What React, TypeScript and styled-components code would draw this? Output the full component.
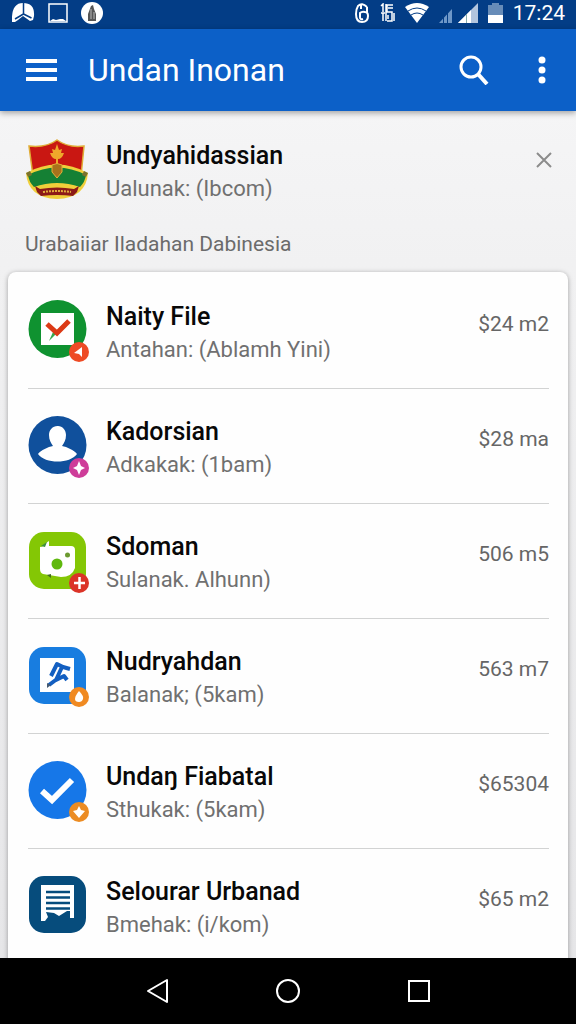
import React from "react";
import styled, { createGlobalStyle } from "styled-components";

const Global = createGlobalStyle`
  *, *::before, *::after { box-sizing: border-box; }
  body { margin: 0; background: #f2f2f3; font-family: Roboto, "Liberation Sans", sans-serif; }
  h1, h2, p, ul { margin: 0; padding: 0; }
  button { border: 0; padding: 0; background: none; color: inherit; font: inherit; cursor: pointer; }
`;

const Screen = styled.div`
  display: flex;
  flex-direction: column;
  height: 100vh;
`;

const StatusBar = styled.div`
  display: flex;
  flex: none;
  justify-content: space-between;
  height: 29px;
  padding: 0 11px 0 12px;
  background: #033d86;
  color: #fff;
`;

const StatusGroup = styled.div<{ $gap: number }>`
  display: flex;
  align-items: center;
  gap: ${(p) => p.$gap}px;
  height: 25px;
`;

const Clock = styled.time`
  font-size: 21px;
  line-height: 26px;
`;

const AppBar = styled.header`
  display: flex;
  flex: none;
  align-items: center;
  position: relative;
  z-index: 1;
  height: 82px;
  padding: 0 14px 0 22px;
  background: #0c60c8;
  color: #fff;
  box-shadow: 0 2px 6px rgba(0, 0, 0, 0.35);
`;

const AppTitle = styled.h1`
  flex: 1;
  margin-left: 26px;
  font-size: 32px;
  font-weight: 400;
  line-height: 40px;
`;

const IconButton = styled.button<{ $width: number }>`
  display: flex;
  align-items: center;
  justify-content: center;
  width: ${(p) => p.$width}px;
  height: 40px;
`;

const Actions = styled.div`
  display: flex;
  gap: 28px;
`;

const Content = styled.main`
  display: flex;
  flex: 1;
  flex-direction: column;
  min-height: 0;
  padding: 0 8px;
  overflow-y: auto;
  scrollbar-width: none;
  background: linear-gradient(#f5f5f6, #f1f1f2 18%, #e6e6e8);
`;

const Featured = styled.section`
  display: flex;
  flex: none;
  align-items: flex-start;
  height: 117px;
  padding: 28px 14px 0 16px;
`;

const Caption = styled.p`
  flex: none;
  height: 44px;
  padding: 0 17px;
  color: #6b6b6b;
  font-size: 21px;
  line-height: 32px;
`;

const Card = styled.ul`
  flex: none;
  padding: 2px 19px 0 20px;
  border-radius: 8px 8px 0 0;
  background: #fefefe;
  box-shadow: 0 1px 5px rgba(0, 0, 0, 0.35);
  list-style: none;
`;

const Row = styled.li`
  display: flex;
  align-items: flex-start;
  height: 115px;
  padding-top: 26px;
  border-bottom: 1px solid #d2d3d3;

  &:last-child { border-bottom: 0; }
`;

const TextBlock = styled.div`
  flex: 1;
  min-width: 0;
  margin-left: 16px;
`;

const Name = styled.h2`
  color: #080808;
  font-size: 25px;
  font-weight: 500;
  line-height: 34px;
  white-space: nowrap;
`;

const Detail = styled.p`
  color: #707070;
  font-size: 22px;
  line-height: 32px;
  white-space: nowrap;
`;

const Amount = styled.span`
  margin-top: 8px;
  color: #666;
  font-size: 21px;
  line-height: 32px;
`;

const CloseButton = styled(IconButton)`
  height: 20px;
  margin-top: 11px;
  color: #8c8c8c;
`;

const NavBar = styled.nav`
  display: flex;
  flex: none;
  justify-content: center;
  gap: 91px;
  height: 66px;
  padding-top: 13px;
  background: #000;
  color: #fff;
`;

function Shell({ round, fill, y, children }: { round?: boolean; fill: string; y: number; children: React.ReactNode }) {
  return (
    <svg width="62" height="64" viewBox="0 0 62 64" aria-hidden="true">
      {round ? <circle cx="29.5" cy={y + 29} r="29" fill={fill} /> : <rect x="1" y={y} width="57" height="57" rx="15" fill={fill} />}
      {children}
    </svg>
  );
}

const FileIcon = () => (
  <Shell round fill="#0f9230" y={0}>
    <path d="M13 13H46V45H13Z" fill="#fff" />
    <path d="m25 32-4 9 7-7Z" fill="#36a84e" />
    <path d="m19 24 10 9 12-12" fill="none" stroke="#dc3a16" strokeWidth="5" />
    <circle cx="51" cy="52" r="10" fill="#ee4b25" />
    <path d="M46 53 54 47V57L51 54Z" fill="#fff" />
  </Shell>
);

const ContactIcon = () => (
  <Shell round fill="#10509c" y={1}>
    <path d="M29.500 11c-5 0-8.500 4-8.500 9 0 5 2 8 4 11-5 1-12 4-15 8 7 10 32 10 39 0-3-4-10-7-15-8 2-3 4-6 4-11 0-5-3.500-9-8-9Z" fill="#fff" />
    <circle cx="51" cy="53" r="10" fill="#ce3d99" />
    <path d="m51 46 2 5 4 2-4 2-2 5-2-5-4-2 4-2Z" fill="#fff" />
  </Shell>
);

const CameraIcon = () => (
  <Shell fill="#84c705" y={2}>
    <path d="M12 17q4 0 6-4l3-2v5H43q4 0 4 4V38q-3 9-14 9L15 44q-3-1-3-5Z" fill="#fff" />
    <path d="m13 16 6-4-2 5Z" fill="#3c8f3c" />
    <circle cx="29" cy="34" r="5.500" fill="#5fb80d" />
    <circle cx="39.500" cy="25" r="2.500" fill="#6c9a30" />
    <path d="m19 45 4-1v4Z" fill="#426c20" />
    <circle cx="51" cy="53" r="10" fill="#db3327" />
    <path d="M51.500 47v12M46 53h11" stroke="#fff" strokeWidth="2.500" />
  </Shell>
);

const RunnerIcon = () => (
  <Shell fill="#187de0" y={2}>
    <path d="M12 13H46V47H12Z" fill="#fff" />
    <path d="m23 31 6-12 6 3 7 2M34 22l-6 13 8-4 3 4M29 34l-8 6" fill="none" stroke="#135fc1" strokeWidth="4" strokeLinejoin="round" />
    <path d="m19 38 4 2-4 3Z" fill="#455a72" />
    <circle cx="51" cy="52" r="10" fill="#f08a22" />
    <path d="M51 46q5 5 4 8-1 3-4 3-4 0-4-3 0-3 4-8Z" fill="#fff" />
  </Shell>
);

const CheckIcon = () => (
  <Shell round fill="#1677e8" y={1}>
    <path d="m14 31 10 9 20-20" fill="none" stroke="#fff" strokeWidth="6" />
    <circle cx="51" cy="52" r="10" fill="#ec8c23" />
    <path d="m51 46 2 4 4 1-6 7-6-7 4-1Z" fill="#fff" />
  </Shell>
);

const ReceiptIcon = () => (
  <Shell fill="#064c7c" y={1}>
    <path d="M13 10H46V43H42V36H39l-8 5-5-3-8-1 2 5-3 4H13Z" fill="#fff" />
    <path d="M18 17H42M18 22.500H42M18 28H42M18 33.500H42" stroke="#064c7c" strokeWidth="2.500" />
  </Shell>
);

const Emblem = () => (
  <svg width="66" height="64" viewBox="0 0 66 64" aria-hidden="true">
    <path d="M5 7q17 2 28-6 11 8 27 6l-3 30H9Z" fill="#c91712" stroke="#e0ac35" strokeWidth="1.500" />
    <path d="M2 34q31-17 62 0-2 25-31 26Q4 59 2 34Z" fill="#f0cf3a" />
    <path d="M4 36q29-15 58 0-1 7-6 12-23-8-46 0-5-5-6-12Z" fill="#158034" />
    <path d="m11 47 5 3q17-3 34 0l5-3-2 6-4 4q-16-2-32 0l-4-4Z" fill="#8c1a18" />
    <path d="M19 53q14-2 28 0" fill="none" stroke="#e3ae3c" strokeWidth="2" strokeDasharray="2 1" />
    <path d="m33 5 2 6 3-1-1 4 3 0q-2 6-6 6v5h-2v-5q-4 0-6-6l3 0-1-4 3 1Z" fill="#efa82b" />
    <path d="M28 26q5-3 10 0v7l-5 6-5-6Z" fill="#a8721c" stroke="#e4b13a" />
    <path d="m2 34 4-2 2 4-4 2ZM64 34l-4-2-2 4 4 2Z" fill="#79722c" />
  </svg>
);

const items = [
  { name: "Naity File", detail: "Antahan: (Ablamh Yini)", amount: "$24 m2", Icon: FileIcon },
  { name: "Kadorsian", detail: "Adkakak: (1bam)", amount: "$28 ma", Icon: ContactIcon },
  { name: "Sdoman", detail: "Sulanak. Alhunn)", amount: "506 m5", Icon: CameraIcon },
  { name: "Nudryahdan", detail: "Balanak; (5kam)", amount: "563 m7", Icon: RunnerIcon },
  { name: "Undaŋ Fiabatal", detail: "Sthukak: (5kam)", amount: "$65304", Icon: CheckIcon },
  { name: "Selourar Urbanad", detail: "Bmehak: (i/kom)", amount: "$65 m2", Icon: ReceiptIcon },
];

export default function App() {
  return (
    <Screen>
      <Global />
      <StatusBar>
        <StatusGroup $gap={13}>
          <svg width="23" height="21" viewBox="0 0 23 21" aria-hidden="true">
            <path d="M0 20Q-1 1 11 1q12 0 11 13l-1 4-3 1-7-5-5 4-3 2Z" fill="#fff" />
            <path d="M11.500 1v11L3 17m8.500-5 8 4" fill="none" stroke="#033d86" strokeWidth="1.500" />
          </svg>
          <svg width="20" height="20" viewBox="0 0 20 20" aria-hidden="true">
            <path d="M1 1H19V19H1Z" fill="none" stroke="#fff" strokeWidth="1.500" />
            <path d="m2 18 3-2 3 1 4-1 3 0 3 2Z" fill="#fff" />
          </svg>
          <svg width="22" height="22" viewBox="0 0 22 22" aria-hidden="true">
            <circle cx="11" cy="11" r="11" fill="#fff" />
            <path d="M7 19v-7l3-8 2-1 1 4 2 5v7Z" fill="#555" />
            <path d="M10 7v10m3-7v7" stroke="#bbb" />
          </svg>
        </StatusGroup>
        <StatusGroup $gap={10}>
          <svg width="15" height="20" viewBox="0 0 15 20" fill="none" stroke="#fff" strokeWidth="2" aria-hidden="true">
            <path d="M12 4Q7-1 3 3q-2 3-2 8 0 8 6 8 6 0 6-6 0-4-3-4-3-1-5 1v4q0 3 3 2M6 2V6M12 4v5" />
          </svg>
          <svg width="15" height="20" viewBox="0 0 15 20" fill="none" stroke="#fff" strokeWidth="1.500" aria-hidden="true">
            <path d="M1 3 3 1V9M1 10H5M3 10V18M13 2H7V9H12V18H7M8 5H13M8 12V16M6 1V18M14 10V18" />
          </svg>
          <svg width="24" height="20" viewBox="0 0 24 20" aria-hidden="true">
            <path d="M0 4Q12-4 24 4L12 20Z" fill="#fff" />
            <path d="M3 8q9-6 18 0M6 12q6-4 12 0" fill="none" stroke="#033d86" />
          </svg>
          <StatusGroup $gap={6}>
            <svg width="13" height="20" viewBox="0 0 13 20" aria-hidden="true">
              <path d="M0 20 13 6V20Z" fill="#6f98c8" />
              <path d="M4.500 14v6M8.500 9v11" stroke="#033d86" />
            </svg>
            <svg width="20" height="20" viewBox="0 0 20 20" aria-hidden="true">
              <path d="M0 20 20 0V20Z" fill="#b3c5dd" />
              <path d="M0 20 13 7V20Z" fill="#fff" />
              <path d="M8.500 11v9" stroke="#8aa" />
            </svg>
          </StatusGroup>
          <svg width="15" height="20" viewBox="0 0 15 20" aria-hidden="true">
            <path d="M0 2H4V0H11V2H15V20H0Z" fill="#678cb8" />
            <path d="M0 12H15V20H0Z" fill="#fff" />
          </svg>
          <Clock>17:24</Clock>
        </StatusGroup>
      </StatusBar>
      <AppBar>
        <IconButton $width={40} aria-label="Menu">
          <svg width="32" height="24" viewBox="0 0 32 24" aria-hidden="true">
            <path d="M0 3H31M0 12H31M0 21H31" stroke="#fff" strokeWidth="4" />
          </svg>
        </IconButton>
        <AppTitle>Undan Inonan</AppTitle>
        <Actions>
          <IconButton $width={40} aria-label="Search">
            <svg width="30" height="30" viewBox="0 0 30 30" fill="none" stroke="#fff" aria-hidden="true">
              <circle cx="12" cy="12" r="10" strokeWidth="3" />
              <path d="m19 19 9 10" strokeWidth="4" />
            </svg>
          </IconButton>
          <IconButton $width={40} aria-label="More options">
            <svg width="8" height="28" viewBox="0 0 8 28" fill="#fff" aria-hidden="true">
              <circle cx="4" cy="4" r="3.500" />
              <circle cx="4" cy="14" r="3.500" />
              <circle cx="4" cy="24" r="3.500" />
            </svg>
          </IconButton>
        </Actions>
      </AppBar>
      <Content>
        <Featured>
          <Emblem />
          <TextBlock>
            <Name>Undyahidassian</Name>
            <Detail>Ualunak: (Ibcom)</Detail>
          </TextBlock>
          <CloseButton $width={20} aria-label="Dismiss">
            <svg width="16" height="16" viewBox="0 0 16 16" fill="none" stroke="currentColor" strokeWidth="2" aria-hidden="true">
              <path d="m1 1 14 14M15 1 1 15" />
            </svg>
          </CloseButton>
        </Featured>
        <Caption>Urabaiiar Iladahan Dabinesia</Caption>
        <Card>
          {items.map(({ name, detail, amount, Icon }) => (
            <Row key={name}>
              <Icon />
              <TextBlock>
                <Name>{name}</Name>
                <Detail>{detail}</Detail>
              </TextBlock>
              <Amount>{amount}</Amount>
            </Row>
          ))}
        </Card>
      </Content>
      <NavBar aria-label="System">
        <IconButton $width={40} aria-label="Back">
          <svg width="24" height="26" viewBox="0 0 24 26" fill="none" stroke="#fff" strokeWidth="2" strokeLinejoin="round" aria-hidden="true">
            <path d="M22 2V24L3 13Z" />
          </svg>
        </IconButton>
        <IconButton $width={40} aria-label="Home">
          <svg width="24" height="24" viewBox="0 0 24 24" fill="none" stroke="#fff" strokeWidth="2" aria-hidden="true">
            <circle cx="12" cy="12" r="11" />
          </svg>
        </IconButton>
        <IconButton $width={40} aria-label="Recent apps">
          <svg width="22" height="22" viewBox="0 0 22 22" fill="none" stroke="#fff" strokeWidth="2" aria-hidden="true">
            <path d="M1 1H21V21H1Z" />
          </svg>
        </IconButton>
      </NavBar>
    </Screen>
  );
}
